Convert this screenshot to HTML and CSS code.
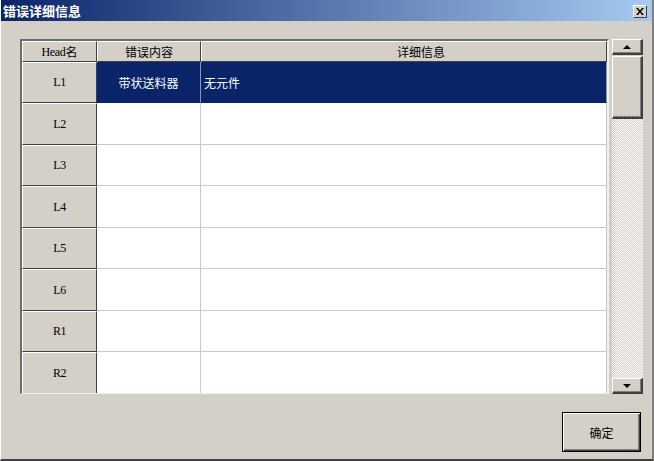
FILE: index.html
```html
<!DOCTYPE html>
<html>
<head>
<meta charset="utf-8">
<link rel="stylesheet" href="styles.css">
</head>
<body>
<div class="window">
  <div class="titlebar">
    <span class="title">错误详细信息</span>
    <span class="close">
      <svg width="8" height="7" viewBox="0 0 8 7"><path d="M0 0h2l2 2.5L6 0h2L5 3.5 8 7H6L4 4.5 2 7H0l3-3.5z" fill="#000"/></svg>
    </span>
  </div>
  <div class="content">
    <div class="gridframe">
      <div class="table">
        <div class="hcell hfirst"><span class="latin">Head</span>名</div>
        <div class="hcell">错误内容</div>
        <div class="hcell hdetail">详细信息</div>

        <div class="rhead r41">L1</div>
        <div class="cell sel center">带状送料器</div>
        <div class="cell sel">无元件</div>

        <div class="rhead r42">L2</div>
        <div class="cell"></div>
        <div class="cell"></div>

        <div class="rhead r41">L3</div>
        <div class="cell"></div>
        <div class="cell"></div>

        <div class="rhead r42">L4</div>
        <div class="cell"></div>
        <div class="cell"></div>

        <div class="rhead r41">L5</div>
        <div class="cell"></div>
        <div class="cell"></div>

        <div class="rhead r42">L6</div>
        <div class="cell"></div>
        <div class="cell"></div>

        <div class="rhead r41">R1</div>
        <div class="cell"></div>
        <div class="cell"></div>

        <div class="rhead r42">R2</div>
        <div class="cell"></div>
        <div class="cell"></div>
      </div>
      <div class="scrollbar">
        <div class="sbtn"><span class="arrow-up"></span></div>
        <div class="thumb"></div>
        <div class="track"></div>
        <div class="sbtn"><span class="arrow-down"></span></div>
      </div>
    </div>
    <div class="footer">
      <button class="okbtn">确定</button>
    </div>
  </div>
</div>
</body>
</html>
```
FILE: styles.css
```css
html, body {
  margin: 0;
  padding: 0;
  background: #d4d0c8;
}
.window {
  width: 654px;
  height: 461px;
  box-sizing: border-box;
  background: #d4d0c8;
  border-left: 1px solid #ffffff;
  border-right: 2px solid #808080;
  border-bottom: 2px solid #404040;
  display: flex;
  flex-direction: column;
  font-family: "Noto Sans CJK SC", "Liberation Sans", sans-serif;
  font-size: 12px;
  color: #000;
}
.titlebar {
  height: 21px;
  flex: none;
  background: linear-gradient(to right, #0a246a, #a6caf0);
  display: flex;
  justify-content: space-between;
  align-items: flex-start;
  padding: 0 5px 0 2px;
}
.title {
  color: #fff;
  font-weight: bold;
  font-size: 13px;
  line-height: 21px;
}
.close {
  margin-top: 5px;
  width: 14px;
  height: 13px;
  box-sizing: border-box;
  background: #d4d0c8;
  border-top: 1px solid #fff;
  border-left: 1px solid #fff;
  border-right: 1px solid #404040;
  border-bottom: 1px solid #404040;
  display: flex;
  align-items: center;
  justify-content: center;
}
.content {
  flex: 1;
  padding: 18px 0 0 19px;
  display: flex;
  flex-direction: column;
}
.gridframe {
  display: flex;
  height: 355px;
  width: 623px;
}
.table {
  width: 589px;
  height: 355px;
  box-sizing: border-box;
  border-top: 2px solid #6c6c6c;
  border-left: 2px solid #6c6c6c;
  border-bottom: 1px solid #f0f0f0;
  border-right: 2px solid #f0f0f0;
  overflow: hidden;
  display: grid;
  grid-template-columns: 75px 104px 1fr;
  grid-auto-rows: min-content;
  background: #fff;
}
.hcell {
  height: 21px;
  box-sizing: border-box;
  background: #d4d0c8;
  border-top: 1px solid #fff;
  border-left: 1px solid #fff;
  border-right: 1px solid #404040;
  border-bottom: 1px solid #404040;
  display: flex;
  align-items: center;
  justify-content: center;
  line-height: 1;
}
.latin {
  font-family: "Liberation Serif", serif;
  font-size: 12px;
  letter-spacing: -0.3px;
}
.hdetail {
  padding-left: 34px;
}
.rhead {
  box-sizing: border-box;
  background: #d4d0c8;
  border-top: 1px solid #fff;
  border-left: 1px solid #fff;
  border-right: 1px solid #404040;
  border-bottom: 1px solid #404040;
  display: flex;
  align-items: center;
  justify-content: center;
  font-family: "Liberation Serif", serif;
  font-size: 12px;
  letter-spacing: -0.5px;
}
.r41 { height: 41px; }
.r42 { height: 42px; }
.cell {
  box-sizing: border-box;
  background: #fff;
  border-right: 1px solid #c8c8c8;
  border-bottom: 1px solid #c8c8c8;
  display: flex;
  align-items: center;
  padding-left: 3px;
}
.cell.center {
  justify-content: center;
  padding-left: 0;
}
.cell.sel {
  background: #0a246a;
  color: #fff;
  border-right-color: #8a94b4;
  border-bottom-color: #0a246a;
}
.scrollbar {
  width: 31px;
  height: 355px;
  margin-left: 3px;
  display: flex;
  flex-direction: column;
}
.sbtn, .thumb {
  box-sizing: border-box;
  background: #d4d0c8;
  border-top: 1px solid #fff;
  border-left: 1px solid #fff;
  border-right: 2px solid #404040;
  border-bottom: 2px solid #404040;
  box-shadow: inset -1px -1px 0 #808080;
}
.sbtn {
  height: 16px;
  flex: none;
  display: flex;
  align-items: center;
  justify-content: center;
}
.thumb {
  height: 63px;
  flex: none;
  margin-top: 1px;
}
.track {
  flex: 1;
  background-color: #e8e6e2;
  background-image: repeating-conic-gradient(#ffffff 0 25%, #d4d0c8 0 50%);
  background-size: 2px 2px;
}
.arrow-up {
  width: 0;
  height: 0;
  border-left: 4px solid transparent;
  border-right: 4px solid transparent;
  border-bottom: 4px solid #000;
}
.arrow-down {
  width: 0;
  height: 0;
  border-left: 4px solid transparent;
  border-right: 4px solid transparent;
  border-top: 4px solid #000;
}
.footer {
  display: flex;
  justify-content: flex-end;
  padding-right: 11px;
  margin-top: 18px;
}
.okbtn {
  width: 79px;
  height: 40px;
  box-sizing: border-box;
  background: #d4d0c8;
  border: 1px solid #000;
  box-shadow: inset 1px 1px 0 #fff, inset -1px -1px 0 #404040, inset -2px -2px 0 #808080;
  font-family: "Noto Sans CJK SC", sans-serif;
  font-size: 12px;
  color: #000;
  padding: 0;
  margin: 0;
}
```
